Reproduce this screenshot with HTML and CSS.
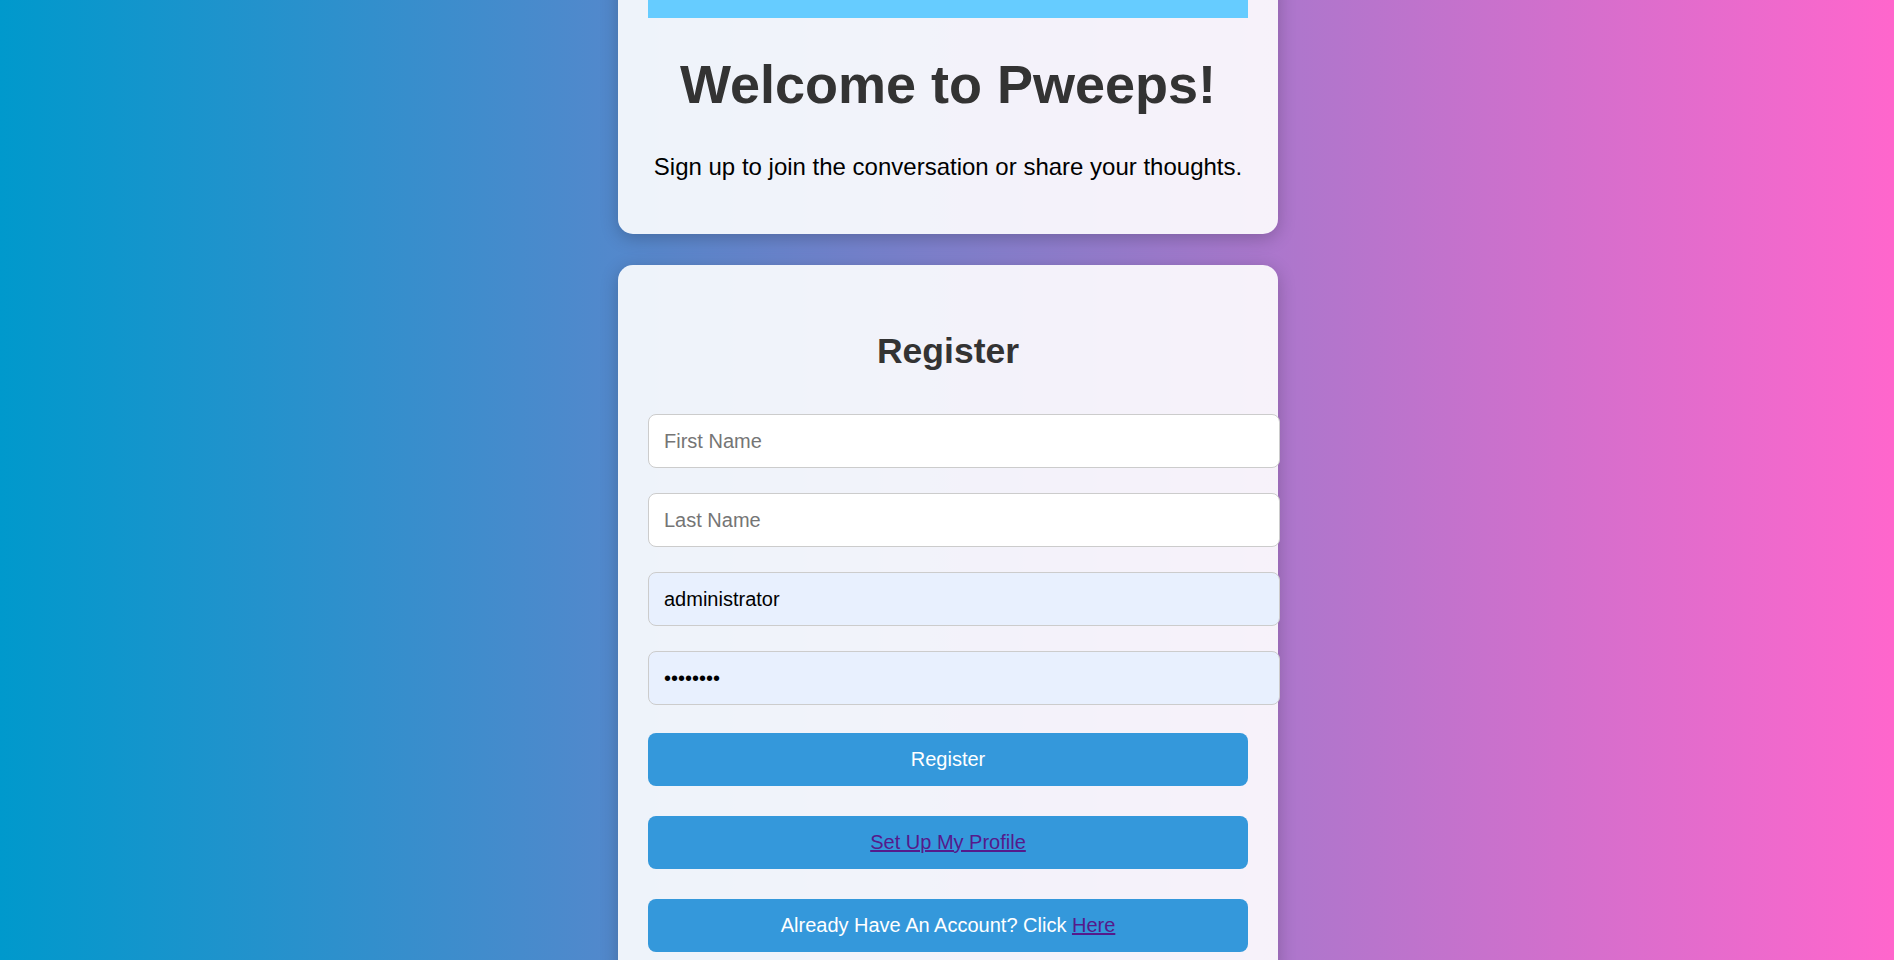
FILE: index.html
```html
<!DOCTYPE html>
<html lang="en">
<head>
<meta charset="utf-8">
<title>Pweeps - Register</title>
<link rel="stylesheet" href="styles.css">
</head>
<body>
<main class="page">
  <section class="card intro">
    <div class="banner"></div>
    <h1 class="title">Welcome to Pweeps!</h1>
    <p class="subtitle">Sign up to join the conversation or share your thoughts.</p>
  </section>
  <section class="card register">
    <h2 class="form-title">Register</h2>
    <form class="form">
      <input class="field" type="text" placeholder="First Name">
      <input class="field" type="text" placeholder="Last Name">
      <input class="field autofill" type="text" value="administrator">
      <input class="field autofill" type="password" value="password">
      <div class="actions">
        <button class="btn" type="button">Register</button>
        <div class="btn"><a class="link" href="#">Set Up My Profile</a></div>
        <div class="btn">Already Have An Account? Click <a class="link" href="#">Here</a></div>
      </div>
    </form>
  </section>
</main>
</body>
</html>
```

FILE: styles.css
```css
html, body {
  margin: 0;
  padding: 0;
}
body {
  min-height: 100vh;
  padding-left: 2px;
  background: linear-gradient(to right, #0099cc, #ff66cc);
  font-family: "Liberation Sans", Arial, sans-serif;
  overflow: hidden;
}
.page {
  width: 660px;
  margin: -30px auto 0;
  display: flex;
  flex-direction: column;
  gap: 31px;
}
.card {
  background: rgba(255, 255, 255, 0.9);
  border-radius: 15px;
  padding: 30px;
  box-shadow: 0 4px 18px rgba(0, 0, 0, 0.22);
}
.banner {
  height: 18px;
  background: #66ccff;
}
.title {
  font-size: 54px;
  font-weight: bold;
  color: #333;
  text-align: center;
  margin: 35px 0 38px;
}
.subtitle {
  font-size: 24px;
  color: #000;
  text-align: center;
  margin: 0 0 23px;
}
.form-title {
  font-size: 35.5px;
  font-weight: bold;
  color: #333;
  text-align: center;
  margin: 36px 0 42px;
}
.form {
  display: flex;
  flex-direction: column;
  gap: 25px;
}
.field {
  display: block;
  width: 600px;
  box-sizing: content-box;
  padding: 0 15px;
  margin: 0;
  border: 1px solid #ccc;
  border-radius: 8px;
  background: #fff;
  font-family: "Liberation Sans", Arial, sans-serif;
  font-size: 20px;
  color: #000;
  height: 52px;
  outline: none;
}
.field::placeholder {
  color: #757575;
}
.autofill {
  background: #e8f0fe;
}
.actions {
  display: flex;
  flex-direction: column;
  gap: 30px;
  margin-top: 3px;
}
.btn {
  display: block;
  width: 600px;
  height: 53px;
  box-sizing: border-box;
  padding: 0;
  border: none;
  border-radius: 8px;
  background: #3498db;
  color: #fff;
  font-family: "Liberation Sans", Arial, sans-serif;
  font-size: 20px;
  line-height: 53px;
  text-align: center;
}
.link {
  color: #551a8b;
  text-decoration: underline;
}
```
